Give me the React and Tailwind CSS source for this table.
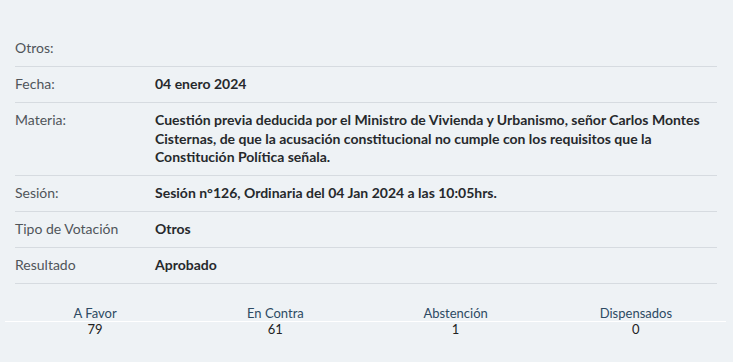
export default function App() {
    const rows = [
        { label: "Otros:", value: "" },
        { label: "Fecha:", value: "04 enero 2024" },
        {
            label: "Materia:",
            value:
                "Cuestión previa deducida por el Ministro de Vivienda y Urbanismo, señor Carlos Montes Cisternas, de que la acusación constitucional no cumple con los requisitos que la Constitución Política señala.",
        },
        { label: "Sesión:", value: "Sesión n°126, Ordinaria del 04 Jan 2024 a las 10:05hrs." },
        { label: "Tipo de Votación", value: "Otros" },
        { label: "Resultado", value: "Aprobado" },
    ];

    const votes = [
        { label: "A Favor", count: 79 },
        { label: "En Contra", count: 61 },
        { label: "Abstención", count: 1 },
        { label: "Dispensados", count: 0 },
    ];

    return (
        <div className="min-h-screen w-full bg-[#eef2f5] font-['Lato','Noto_Sans',sans-serif] pt-[31px]">
            {/* Detail rows */}
            <div className="ml-[15px] mr-[16px]">
                {rows.map((row) => (
                    <div
                        key={row.label}
                        className="flex border-b border-[#d6dbe0] py-[8.25px] text-[14px] leading-[18.5px]"
                    >
                        <div className="w-[140px] shrink-0 text-[#50555a]">{row.label}</div>
                        <div className="flex-1 font-bold text-[#26292c]">{row.value}</div>
                    </div>
                ))}
            </div>

            {/* Vote counts */}
            <div className="mt-[22px] mx-[5px] mr-[7px]">
                <div className="grid grid-cols-4 border-b border-white text-[13px] leading-[15px] text-[#2d4a63] text-center">
                    {votes.map((v) => (
                        <div key={v.label}>{v.label}</div>
                    ))}
                </div>
                <div className="grid grid-cols-4 text-[13px] leading-[14px] text-[#222] text-center">
                    {votes.map((v) => (
                        <div key={v.label}>{v.count}</div>
                    ))}
                </div>
            </div>
        </div>
    );
}
